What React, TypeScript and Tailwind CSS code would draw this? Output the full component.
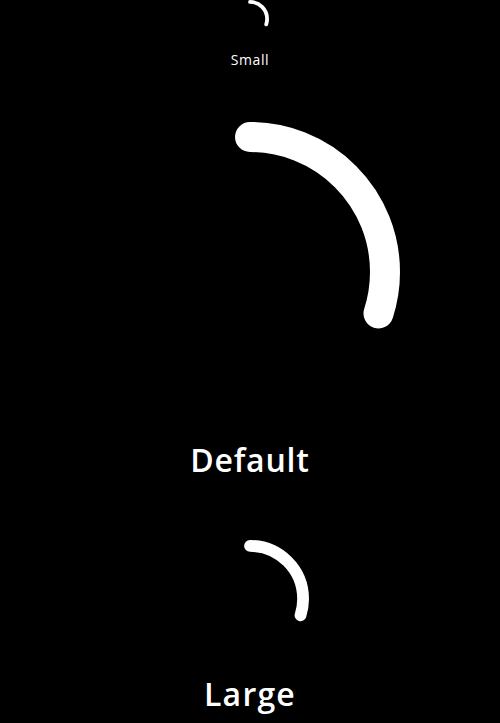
import type { ReactNode } from "react";

type SpinnerProps = {
  size: number;
  className?: string;
};

// arc from 12 o'clock clockwise, ~110 degrees, round caps
function Spinner({ size, className }: SpinnerProps) {
  return (
    <svg width={size} height={size} viewBox="0 0 100 100" className={className}>
      <circle
        cx="50"
        cy="50"
        r="45"
        fill="none"
        stroke="white"
        strokeWidth="10"
        strokeLinecap="round"
        pathLength={360}
        strokeDasharray="108 360"
        transform="rotate(-90 50 50)"
      />
    </svg>
  );
}

function Label({ children, className }: { children: ReactNode; className?: string }) {
  return <p className={"text-white font-['Open_Sans',sans-serif] " + (className ?? "")}>{children}</p>;
}

export default function App() {
  return (
    <div className="min-h-[723px] w-full bg-black overflow-hidden">
      <div className="flex flex-col items-center">
        <Spinner size={38} />
        <Label className="mt-[13px] text-[14px] leading-[18px] tracking-[0.6px]">Small</Label>

        <Spinner size={300} className="mt-[53px]" />
        <Label className="mt-[22px] text-[32px] leading-[32px] font-semibold tracking-[0.8px]">Default</Label>

        <Spinner size={118} className="mt-[64px]" />
        <Label className="mt-[20px] text-[32px] leading-[31px] font-semibold tracking-[1.2px]">Large</Label>
      </div>
    </div>
  );
}
